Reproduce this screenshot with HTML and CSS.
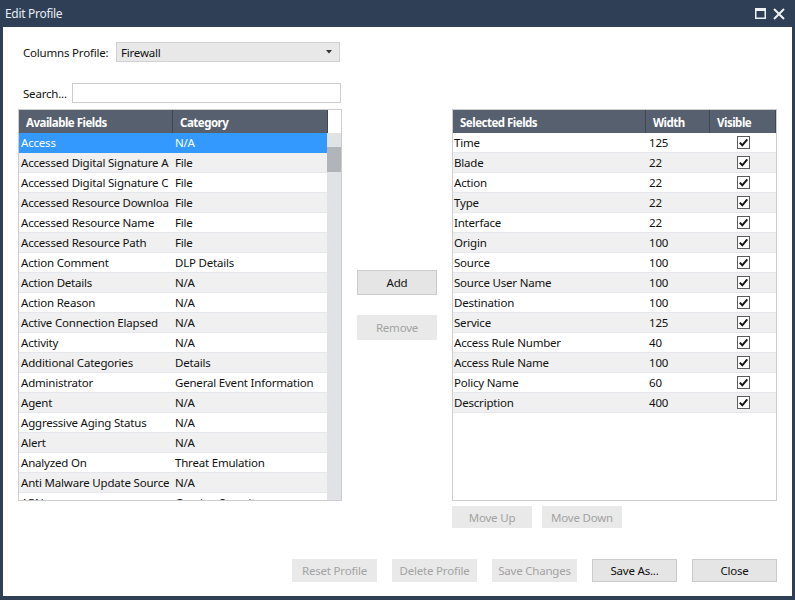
FILE: index.html
```html
<!DOCTYPE html>
<html>
<head>
<meta charset="utf-8">
<link rel="stylesheet" href="styles.css">
</head>
<body>
<div class="window">
  <div class="titlebar">
    <span class="title">Edit Profile</span>
    <div class="controls">
      <svg class="ic-max" width="11" height="11" viewBox="0 0 11 11"><rect x="0.75" y="0.75" width="9.5" height="9.5" fill="none" stroke="#eef1f5" stroke-width="1.5"/><rect x="0" y="0" width="11" height="3" fill="#eef1f5"/></svg>
      <svg class="ic-close" width="12" height="12" viewBox="0 0 12 12"><path d="M1 1 L11 11 M11 1 L1 11" stroke="#eef1f5" stroke-width="2" fill="none"/></svg>
    </div>
  </div>
  <div class="content">
    <div class="profile-row">
      <span class="lbl lbl-profile">Columns Profile:</span>
      <div class="select"><span>Firewall</span><svg width="6" height="4" viewBox="0 0 6 4"><polygon points="0,0 6,0 3,3.5" fill="#333"/></svg></div>
    </div>
    <div class="search-row">
      <span class="lbl lbl-search">Search...</span>
      <div class="input"></div>
    </div>
    <div class="main">
      <div class="table left">
        <div class="thead">
          <div class="th th-name">Available Fields</div>
          <div class="th th-cat">Category</div>
          <div class="th-pad"></div>
        </div>
        <div class="tbody">
          <div class="list">
            <div class="row sel"><span class="c1">Access</span><span class="c2">N/A</span></div>
            <div class="row alt"><span class="c1">Accessed Digital Signature A</span><span class="c2">File</span></div>
            <div class="row"><span class="c1">Accessed Digital Signature C</span><span class="c2">File</span></div>
            <div class="row alt"><span class="c1">Accessed Resource Downloa</span><span class="c2">File</span></div>
            <div class="row"><span class="c1">Accessed Resource Name</span><span class="c2">File</span></div>
            <div class="row alt"><span class="c1">Accessed Resource Path</span><span class="c2">File</span></div>
            <div class="row"><span class="c1">Action Comment</span><span class="c2">DLP Details</span></div>
            <div class="row alt"><span class="c1">Action Details</span><span class="c2">N/A</span></div>
            <div class="row"><span class="c1">Action Reason</span><span class="c2">N/A</span></div>
            <div class="row alt"><span class="c1">Active Connection Elapsed</span><span class="c2">N/A</span></div>
            <div class="row"><span class="c1">Activity</span><span class="c2">N/A</span></div>
            <div class="row alt"><span class="c1">Additional Categories</span><span class="c2">Details</span></div>
            <div class="row"><span class="c1">Administrator</span><span class="c2">General Event Information</span></div>
            <div class="row alt"><span class="c1">Agent</span><span class="c2">N/A</span></div>
            <div class="row"><span class="c1">Aggressive Aging Status</span><span class="c2">N/A</span></div>
            <div class="row alt"><span class="c1">Alert</span><span class="c2">N/A</span></div>
            <div class="row"><span class="c1">Analyzed On</span><span class="c2">Threat Emulation</span></div>
            <div class="row alt"><span class="c1">Anti Malware Update Source</span><span class="c2">N/A</span></div>
            <div class="row"><span class="c1">APN</span><span class="c2">Gaming Security</span></div>
          </div>
          <div class="scrollbar"><div class="thumb"></div></div>
        </div>
      </div>
      <div class="mid">
        <div class="btn btn-add">Add</div>
        <div class="btn dis btn-remove">Remove</div>
      </div>
      <div class="table right">
        <div class="thead">
          <div class="th r1">Selected Fields</div>
          <div class="th r2">Width</div>
          <div class="th r3">Visible</div>
        </div>
        <div class="rbody">
          <div class="rrow"><span class="d1">Time</span><span class="d2">125</span><span class="d3"><svg width="13" height="13" viewBox="0 0 13 13"><rect x="0.5" y="0.5" width="12" height="12" fill="#fff" stroke="#5c5c5c"/><path d="M2.8 6.6 L5.3 9.3 L10.3 3.4" fill="none" stroke="#151515" stroke-width="2"/></svg></span></div>
          <div class="rrow alt"><span class="d1">Blade</span><span class="d2">22</span><span class="d3"><svg width="13" height="13" viewBox="0 0 13 13"><rect x="0.5" y="0.5" width="12" height="12" fill="#fff" stroke="#5c5c5c"/><path d="M2.8 6.6 L5.3 9.3 L10.3 3.4" fill="none" stroke="#151515" stroke-width="2"/></svg></span></div>
          <div class="rrow"><span class="d1">Action</span><span class="d2">22</span><span class="d3"><svg width="13" height="13" viewBox="0 0 13 13"><rect x="0.5" y="0.5" width="12" height="12" fill="#fff" stroke="#5c5c5c"/><path d="M2.8 6.6 L5.3 9.3 L10.3 3.4" fill="none" stroke="#151515" stroke-width="2"/></svg></span></div>
          <div class="rrow alt"><span class="d1">Type</span><span class="d2">22</span><span class="d3"><svg width="13" height="13" viewBox="0 0 13 13"><rect x="0.5" y="0.5" width="12" height="12" fill="#fff" stroke="#5c5c5c"/><path d="M2.8 6.6 L5.3 9.3 L10.3 3.4" fill="none" stroke="#151515" stroke-width="2"/></svg></span></div>
          <div class="rrow"><span class="d1">Interface</span><span class="d2">22</span><span class="d3"><svg width="13" height="13" viewBox="0 0 13 13"><rect x="0.5" y="0.5" width="12" height="12" fill="#fff" stroke="#5c5c5c"/><path d="M2.8 6.6 L5.3 9.3 L10.3 3.4" fill="none" stroke="#151515" stroke-width="2"/></svg></span></div>
          <div class="rrow alt"><span class="d1">Origin</span><span class="d2">100</span><span class="d3"><svg width="13" height="13" viewBox="0 0 13 13"><rect x="0.5" y="0.5" width="12" height="12" fill="#fff" stroke="#5c5c5c"/><path d="M2.8 6.6 L5.3 9.3 L10.3 3.4" fill="none" stroke="#151515" stroke-width="2"/></svg></span></div>
          <div class="rrow"><span class="d1">Source</span><span class="d2">100</span><span class="d3"><svg width="13" height="13" viewBox="0 0 13 13"><rect x="0.5" y="0.5" width="12" height="12" fill="#fff" stroke="#5c5c5c"/><path d="M2.8 6.6 L5.3 9.3 L10.3 3.4" fill="none" stroke="#151515" stroke-width="2"/></svg></span></div>
          <div class="rrow alt"><span class="d1">Source User Name</span><span class="d2">100</span><span class="d3"><svg width="13" height="13" viewBox="0 0 13 13"><rect x="0.5" y="0.5" width="12" height="12" fill="#fff" stroke="#5c5c5c"/><path d="M2.8 6.6 L5.3 9.3 L10.3 3.4" fill="none" stroke="#151515" stroke-width="2"/></svg></span></div>
          <div class="rrow"><span class="d1">Destination</span><span class="d2">100</span><span class="d3"><svg width="13" height="13" viewBox="0 0 13 13"><rect x="0.5" y="0.5" width="12" height="12" fill="#fff" stroke="#5c5c5c"/><path d="M2.8 6.6 L5.3 9.3 L10.3 3.4" fill="none" stroke="#151515" stroke-width="2"/></svg></span></div>
          <div class="rrow alt"><span class="d1">Service</span><span class="d2">125</span><span class="d3"><svg width="13" height="13" viewBox="0 0 13 13"><rect x="0.5" y="0.5" width="12" height="12" fill="#fff" stroke="#5c5c5c"/><path d="M2.8 6.6 L5.3 9.3 L10.3 3.4" fill="none" stroke="#151515" stroke-width="2"/></svg></span></div>
          <div class="rrow"><span class="d1">Access Rule Number</span><span class="d2">40</span><span class="d3"><svg width="13" height="13" viewBox="0 0 13 13"><rect x="0.5" y="0.5" width="12" height="12" fill="#fff" stroke="#5c5c5c"/><path d="M2.8 6.6 L5.3 9.3 L10.3 3.4" fill="none" stroke="#151515" stroke-width="2"/></svg></span></div>
          <div class="rrow alt"><span class="d1">Access Rule Name</span><span class="d2">100</span><span class="d3"><svg width="13" height="13" viewBox="0 0 13 13"><rect x="0.5" y="0.5" width="12" height="12" fill="#fff" stroke="#5c5c5c"/><path d="M2.8 6.6 L5.3 9.3 L10.3 3.4" fill="none" stroke="#151515" stroke-width="2"/></svg></span></div>
          <div class="rrow"><span class="d1">Policy Name</span><span class="d2">60</span><span class="d3"><svg width="13" height="13" viewBox="0 0 13 13"><rect x="0.5" y="0.5" width="12" height="12" fill="#fff" stroke="#5c5c5c"/><path d="M2.8 6.6 L5.3 9.3 L10.3 3.4" fill="none" stroke="#151515" stroke-width="2"/></svg></span></div>
          <div class="rrow alt"><span class="d1">Description</span><span class="d2">400</span><span class="d3"><svg width="13" height="13" viewBox="0 0 13 13"><rect x="0.5" y="0.5" width="12" height="12" fill="#fff" stroke="#5c5c5c"/><path d="M2.8 6.6 L5.3 9.3 L10.3 3.4" fill="none" stroke="#151515" stroke-width="2"/></svg></span></div>
        </div>
      </div>
    </div>
    <div class="move-row">
      <div class="btn dis btn-move">Move Up</div>
      <div class="btn dis btn-move">Move Down</div>
    </div>
    <div class="footer">
      <div class="btn dis btn-foot">Reset Profile</div>
      <div class="btn dis btn-foot">Delete Profile</div>
      <div class="btn dis btn-foot">Save Changes</div>
      <div class="btn btn-foot">Save As...</div>
      <div class="btn btn-foot">Close</div>
    </div>
  </div>
</div>
</body>
</html>
```

FILE: styles.css
```css
* { box-sizing: border-box; }
html, body { margin: 0; padding: 0; }
body {
  width: 795px;
  height: 600px;
  overflow: hidden;
  background: #2e3f56;
  font-family: "Noto Sans", "Open Sans", sans-serif;
  font-size: 11.5px;
  letter-spacing: -0.2px;
  color: #111;
}
.window {
  display: flex;
  flex-direction: column;
  height: 600px;
}
.titlebar {
  height: 27px;
  flex: none;
  display: flex;
  align-items: center;
  padding: 0 10px 0 5px;
  color: #e8ecf1;
  font-size: 12px;
}
.title { letter-spacing: -0.3px; }
.controls {
  margin-left: auto;
  display: flex;
  align-items: center;
  gap: 7px;
}
.controls svg { display: block; }
.content {
  flex: 1;
  background: #fff;
  margin: 0 3px 4px 3px;
  padding: 15px 15px 14px 15px;
  display: flex;
  flex-direction: column;
}
.profile-row, .search-row {
  display: flex;
  align-items: center;
  height: 20px;
  padding-left: 5px;
}
.search-row { margin-top: 21px; }
.lbl { white-space: nowrap; color: #111; }
.lbl-profile { width: 93px; }
.lbl-search { width: 49px; }
.select {
  width: 224px;
  height: 20px;
  background: #e8e8e8;
  border: 1px solid #d2d2d2;
  display: flex;
  align-items: center;
  justify-content: space-between;
  padding: 0 7px 0 4px;
}
.select svg { display: block; }
.input {
  width: 269px;
  height: 20px;
  border: 1px solid #cdcdcd;
  background: #fff;
}
.main {
  margin-top: 6px;
  display: grid;
  grid-template-columns: 324px 80px 325px;
  column-gap: 15px;
  height: 392px;
}
.table {
  border: 1px solid #cdcdcd;
  display: flex;
  flex-direction: column;
  overflow: hidden;
  background: #fff;
}
.thead {
  height: 23px;
  flex: none;
  display: flex;
}
.th {
  background: #56606f;
  color: #fff;
  font-weight: bold;
  letter-spacing: -0.5px;
  display: flex;
  align-items: center;
  padding-left: 7px;
  padding-top: 1px;
  white-space: nowrap;
  border-right: 1px solid #3f4754;
}
.th-name { width: 154px; }
.th-cat { width: 155px; }
.th-pad { flex: 1; background: #fff; }
.tbody {
  flex: 1;
  display: flex;
  min-height: 0;
}
.list {
  width: 308px;
  overflow: hidden;
}
.row {
  height: 20px;
  display: flex;
  align-items: center;
  border-bottom: 1px solid #e4e7ec;
  padding-bottom: 1px;
  background: #fff;
  white-space: nowrap;
}
.row.alt { background: #f0f0f0; }
.row.sel { background: #3399ff; color: #fff; border-bottom-color: #3399ff; }
.c1 {
  width: 154px;
  flex: none;
  overflow: hidden;
  padding-left: 2px;
}
.c2 {
  flex: 1;
  overflow: hidden;
  padding-left: 2px;
}
.scrollbar {
  flex: 1;
  background: #e0e2e6;
  padding-top: 14px;
}
.thumb {
  height: 25px;
  background: #b1b4b8;
}
.mid {
  display: flex;
  flex-direction: column;
  padding-top: 161px;
  gap: 20px;
}
.btn {
  display: flex;
  align-items: center;
  justify-content: center;
  background: #e5e5e5;
  border: 1px solid #cbcbcb;
  color: #111;
  white-space: nowrap;
}
.btn.dis {
  background: #e9e9e9;
  border-color: #e9e9e9;
  color: #a3a3a3;
}
.btn-add, .btn-remove { height: 25px; width: 80px; }
.rbody { flex: 1; }
.r1 { width: 193px; }
.r2 { width: 64px; }
.r3 { width: 66px; border-right: 1px solid #3f4754; }
.rrow {
  height: 20px;
  display: flex;
  align-items: center;
  border-bottom: 1px solid #e4e7ec;
  padding-bottom: 1px;
  background: #fff;
  white-space: nowrap;
}
.rrow.alt { background: #f0f0f0; }
.d1 { width: 193px; padding-left: 1px; overflow: hidden; }
.d2 { width: 64px; padding-left: 3px; }
.d3 { width: 66px; display: flex; justify-content: center; }
.d3 svg { display: block; }
.move-row {
  margin-top: 5px;
  display: flex;
  gap: 10px;
  padding-left: 434px;
}
.btn-move { width: 80px; height: 22px; }
.footer {
  margin-top: auto;
  display: flex;
  justify-content: flex-end;
  gap: 15px;
}
.btn-foot { width: 85px; height: 23px; }
```
